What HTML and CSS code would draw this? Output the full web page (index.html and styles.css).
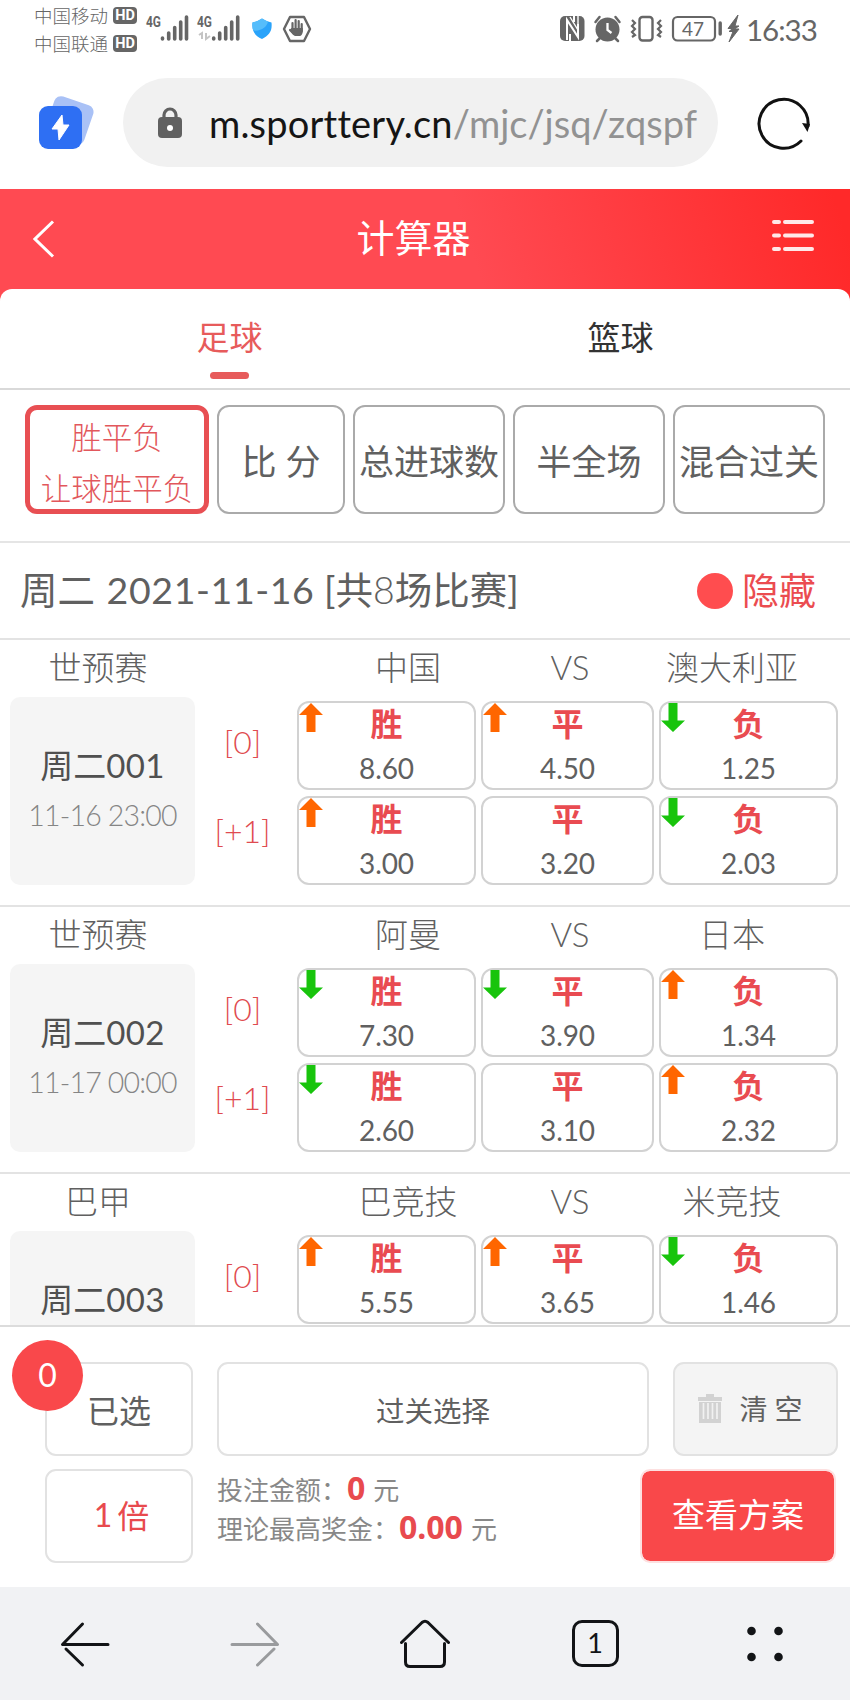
FILE: index.html
```html
<!DOCTYPE html>
<html lang="zh-CN">
<head>
<meta charset="utf-8">
<title>计算器</title>
<link rel="stylesheet" href="styles.css">
</head>
<body>
<svg class="defs" width="0" height="0">
  <symbol id="up" viewBox="0 0 24 29"><path fill="#ff6600" d="M12 0L24 12H16.500V29H7.500V12H0Z"/></symbol>
  <symbol id="down" viewBox="0 0 24 29"><path fill="#18c40c" d="M12 29L24 17.500H16.500V0H7.500V17.500H0Z"/></symbol>
</svg>
<div class="screen">
  <div class="status">
    <div class="carriers">
      <div class="carrier">中国移动<span class="hd">HD</span></div>
      <div class="carrier">中国联通<span class="hd">HD</span></div>
    </div>
    <svg class="status-left" width="170" height="34" viewBox="144 12 170 34">
      <g class="net"><text x="146" y="27" textLength="15" lengthAdjust="spacingAndGlyphs">4G</text><text x="197" y="27" textLength="15" lengthAdjust="spacingAndGlyphs">4G</text></g>
      <g stroke="#666" stroke-width="3.600" stroke-linecap="round"><path d="M162.500 38v1M168.700 33v6M174.700 27.500v11.500M180.700 22v17M186.500 17v22M213.700 38v1M219.700 33v6M225.700 27.500v11.500M231.700 22v17M237.700 17v22"/></g>
      <path d="M199 35l3-2v6M206 33v6l4-3" fill="none" stroke="#c4c4c4" stroke-width="2"/>
      <path d="M262 18.500q-4.500 3-9.500 4c-1 9 2.500 13 9.500 16.500 7-3.500 10.500-7.500 9.500-16.500q-5-1-9.500-4Z" fill="#2aa3fa"/><path d="M262 18.500q-4.500 3-9.500 4c-.3 3 0 6 .8 8 8 1 14-4 14.700-9q-3-1-6-3Z" fill="#55bdfb"/>
      <path d="M290 17h14l6 12-6 12h-14l-6-12Z" fill="none" stroke="#666" stroke-width="2.400" stroke-linejoin="round"/>
      <path d="M292.500 31v-8M295.600 29v-9M298.700 29v-8M301.700 31v-7M294 34l-4-4" stroke="#666" stroke-width="2.200" stroke-linecap="round"/><path d="M291.500 28h11.300v4q-1 4-3 4h-5q-3-2-5-6Z" fill="#666"/>
    </svg>
    <svg class="status-right" width="190" height="34" viewBox="556 12 190 34">
      <rect x="560" y="16" width="24.500" height="25" rx="5" fill="#666"/><path d="M567 40V20l11 17V24M574 16v6M570 41v-7" fill="none" stroke="#fff" stroke-width="2"/><path d="M570 17l8 13V16" fill="none" stroke="#fff" stroke-width="1.400"/>
      <circle cx="607.500" cy="29.500" r="12" fill="#666"/><path d="M607.500 23v7l4 3" fill="none" stroke="#fff" stroke-width="2.300"/><path d="M595.500 22l4-5M619.500 22l-4-5M600 38l-3 3M615 38l3 3" stroke="#666" stroke-width="2.500" stroke-linecap="round"/>
      <rect x="639.500" y="17" width="13" height="23.500" rx="3" fill="none" stroke="#666" stroke-width="2.400"/><path d="M632 20l3 3-3 3 3 3-3 3 3 3-3 2M661 20l-3 3 3 3-3 3 3 3-3 3 3 2" fill="none" stroke="#666" stroke-width="2.200"/>
      <rect x="673" y="17" width="42" height="23.500" rx="4.500" fill="none" stroke="#666" stroke-width="2.200"/><path d="M720.200 23v11" stroke="#666" stroke-width="3.400" stroke-linecap="round"/>
      <text class="battery" x="682" y="36" textLength="22" lengthAdjust="spacingAndGlyphs">47</text>
      <path d="M738 15l-10 13.500h4.500l-3.500 3h4l-4 10.500 10-13h-4.500l4.500-3h-4Z" fill="#666" stroke="#666"/>
    </svg>
    <div class="clock">16:33</div>
  </div>

  <div class="address">
    <svg class="boost" width="56" height="54" viewBox="38 96 56 54">
      <rect x="49" y="100" width="41" height="41" rx="7" fill="#a9c1f6" transform="rotate(19 70 120)"/>
      <rect x="39" y="106" width="43" height="43" rx="9" fill="#2e6ff3"/><path d="M62 115L52 129h6l1 11 10-15h-6Z" fill="#fff" stroke="#fff" stroke-linejoin="round"/>
    </svg>
    <div class="pill">
      <svg width="24" height="31" viewBox="0 0 24 31"><path d="M6 13V8a6 6 0 0 1 12 0v5" fill="none" stroke="#616161" stroke-width="3.200"/><rect y="10" width="24" height="21" rx="4" fill="#616161"/><circle cx="12" cy="21" r="3" fill="#fff"/></svg>
      <div class="url"><span class="domain">m.sporttery.cn</span><span class="path">/mjc/jsq/zqspf</span></div>
    </div>
    <svg class="reload" width="56" height="56" viewBox="756 95 56 56"><path d="M801 141A24.500 24.500 0 1 1 808 126" fill="none" stroke="#111" stroke-width="3" stroke-linecap="round"/><path d="M802 123l8 1-2.500 8Z" fill="#111"/></svg>
  </div>

  <header class="topbar">
    <svg width="22" height="38" viewBox="0 0 22 38"><path d="M20 1.500L2 19l18 17.500" fill="none" stroke="#fff" stroke-width="3"/></svg>
    <h1>计算器</h1>
    <svg width="42" height="32" viewBox="0 0 42 32"><path d="M2 2h5M13 2h27M2 15.500h5M13 15.500h27M2 29h5M13 29h27" stroke="#ffe9e9" stroke-width="4" stroke-linecap="round"/></svg>
  </header>

  <nav class="sports"><div class="sport sport-on">足球</div><div class="sport">篮球</div></nav>

  <div class="plays">
    <div class="play play-on"><span>胜平负</span><span>让球胜平负</span></div>
    <div class="play">比 分</div><div class="play">总进球数</div><div class="play">半全场</div><div class="play">混合过关</div>
  </div>

  <div class="day"><div class="day-text">周二 <span class="date">2021-11-16</span> [共<span class="count">8</span>场比赛]</div><div class="fold"><i class="dot"></i>隐藏</div></div>

  <main class="matches">
    <section class="match">
      <div class="teams"><span>世预赛</span><span>中国</span><span class="vs">VS</span><span>澳大利亚</span></div>
      <div class="detail">
        <div class="info"><b>周二<span>001</span></b><small>11-16 23:00</small></div>
        <div class="handicap"><span>[0]</span><span>[+1]</span></div>
        <div class="odds">
          <div class="odd"><svg class="trend"><use href="#up"/></svg><b>胜</b><span>8.60</span></div>
          <div class="odd"><svg class="trend"><use href="#up"/></svg><b>平</b><span>4.50</span></div>
          <div class="odd"><svg class="trend"><use href="#down"/></svg><b>负</b><span>1.25</span></div>
          <div class="odd"><svg class="trend"><use href="#up"/></svg><b>胜</b><span>3.00</span></div>
          <div class="odd"><b>平</b><span>3.20</span></div>
          <div class="odd"><svg class="trend"><use href="#down"/></svg><b>负</b><span>2.03</span></div>
        </div>
      </div>
    </section>
    <section class="match">
      <div class="teams"><span>世预赛</span><span>阿曼</span><span class="vs">VS</span><span>日本</span></div>
      <div class="detail">
        <div class="info"><b>周二<span>002</span></b><small>11-17 00:00</small></div>
        <div class="handicap"><span>[0]</span><span>[+1]</span></div>
        <div class="odds">
          <div class="odd"><svg class="trend"><use href="#down"/></svg><b>胜</b><span>7.30</span></div>
          <div class="odd"><svg class="trend"><use href="#down"/></svg><b>平</b><span>3.90</span></div>
          <div class="odd"><svg class="trend"><use href="#up"/></svg><b>负</b><span>1.34</span></div>
          <div class="odd"><svg class="trend"><use href="#down"/></svg><b>胜</b><span>2.60</span></div>
          <div class="odd"><b>平</b><span>3.10</span></div>
          <div class="odd"><svg class="trend"><use href="#up"/></svg><b>负</b><span>2.32</span></div>
        </div>
      </div>
    </section>
    <section class="match">
      <div class="teams"><span>巴甲</span><span>巴竞技</span><span class="vs">VS</span><span>米竞技</span></div>
      <div class="detail">
        <div class="info"><b>周二<span>003</span></b></div>
        <div class="handicap"><span>[0]</span></div>
        <div class="odds">
          <div class="odd"><svg class="trend"><use href="#up"/></svg><b>胜</b><span>5.55</span></div>
          <div class="odd"><svg class="trend"><use href="#up"/></svg><b>平</b><span>3.65</span></div>
          <div class="odd"><svg class="trend"><use href="#down"/></svg><b>负</b><span>1.46</span></div>
        </div>
      </div>
    </section>
  </main>

  <footer class="slip">
    <div class="slip-row">
      <div class="box chosen">已选<span class="badge">0</span></div>
      <div class="box pass">过关选择</div>
      <div class="box clear"><svg width="24" height="29" viewBox="0 0 24 29"><path d="M0 3h8V0h8v3h8v4H0Z" fill="#d2d2d2"/><path d="M1 8h22v21H1Z" fill="#d2d2d2"/><path d="M5.500 9v16M10 9v16M14.500 9v16M19 9v16" stroke="#f1f1f1" stroke-width="1.700"/></svg>清 空</div>
    </div>
    <div class="slip-row">
      <div class="box times"><span>1</span>倍</div>
      <div class="sums"><div>投注金额：<b>0</b>元</div><div>理论最高奖金：<b>0.00</b>元</div></div>
      <div class="view">查看方案</div>
    </div>
  </footer>

  <nav class="browser-nav">
    <svg viewBox="0 0 50 50"><path d="M3 25.500H48M22.500 5L2.500 25.500M6 30L22.500 46" fill="none" stroke="#121416" stroke-width="3" stroke-linecap="round" stroke-linejoin="round"/></svg>
    <svg viewBox="0 0 50 50"><path d="M2 25.500H47M27.500 5L47.500 25.500M44 30L27.500 46" fill="none" stroke="#999b9d" stroke-width="3" stroke-linecap="round" stroke-linejoin="round"/></svg>
    <svg viewBox="0 0 50 50"><path d="M1.500 23.500L22 3.500Q25 1 28 3.500L48.500 23.500M5.500 24.500V43Q5.500 47.500 10 47.500H40Q44.500 47.500 44.500 43V24.500" fill="none" stroke="#121416" stroke-width="3" stroke-linecap="round" stroke-linejoin="round"/></svg>
    <div class="pages"><span>1</span></div>
    <svg viewBox="0 0 50 50"><g fill="#121416"><circle cx="11.500" cy="12" r="4.300"/><circle cx="38.500" cy="12" r="4.300"/><circle cx="11.500" cy="38" r="4.300"/><circle cx="38.500" cy="38" r="4.300"/></g></svg>
  </nav>
</div>
</body>
</html>
```

FILE: styles.css
```css
* { box-sizing: border-box; }
body { margin: 0; background: #fff; color: #606060; font-family: Lato, "Noto Sans CJK SC", sans-serif; }
svg { flex: none; display: block; }
.defs { position: absolute; }
.screen { width: 850px; height: 1700px; display: flex; flex-direction: column; overflow: hidden; white-space: nowrap; }

.status { height: 60px; flex: none; display: flex; padding-left: 34px; color: #666; }
.carriers { width: 110px; padding-top: 1px; font: 300 18.500px/28px "Noto Sans CJK SC", sans-serif; }
.carrier { display: flex; align-items: center; gap: 5px; }
.hd { width: 24px; height: 17px; border-radius: 4px; background: #666; color: #fff; font: 700 14.500px/17px Roboto, sans-serif; text-align: center; }
.status-left { margin-top: 12px; }
.status-right { margin: 12px 0 0 242px; }
.net { font: 700 15px Roboto, sans-serif; fill: #666; }
.battery { font: 400 20px Lato, sans-serif; fill: #666; }
.clock { font-size: 29.500px; line-height: 59px; letter-spacing: -1px; }

.address { height: 129px; flex: none; display: flex; align-items: flex-start; padding: 18px 0 0 38px; }
.boost { margin-top: 18px; }
.pill { width: 595px; height: 89px; margin-left: 29px; border-radius: 45px; background: #f1f1f1; display: flex; align-items: center; padding: 0 0 0 35px; gap: 27px; }
.url { font: 400 38px/50px Lato, sans-serif; padding-top: 1px; }
.domain { color: #151515; letter-spacing: .2px; }
.path { color: #929292; letter-spacing: 0; }
.reload { margin: 17px 0 0 38px; }

.topbar { height: 114px; flex: none; margin-bottom: -14px; background: linear-gradient(72deg, #ff4a52 55%, #ff2929 98%); display: flex; align-items: flex-start; justify-content: space-between; padding: 31px 36px 0 33px; color: #fff; }
.topbar h1 { margin: -5px 0 0; font-size: 38px; font-weight: 400; line-height: 44px; }

.sports { height: 101px; flex: none; display: flex; padding: 0 35px; border-radius: 12px 12px 0 0; background: #fff; border-bottom: 2px solid #d9d9d9; }
.sport { flex: 1; padding-top: 26px; text-align: center; color: #333; font-size: 33px; line-height: 44px; }
.sport-on { color: #e75b5b; padding-right: 2px; }
.sport-on::after { content: ""; display: block; width: 39px; height: 7px; margin: 13px auto 0; border-radius: 4px; background: #e75b5b; }

.plays { height: 153px; flex: none; display: grid; grid-template-columns: 184px 128px 152px 152px 152px; gap: 8px; padding: 15px 25px 27px; border-bottom: 2px solid #e5e5e5; }
.play { height: 109px; border: 2px solid #aaa; border-radius: 12px; display: flex; align-items: center; justify-content: center; font-size: 35px; }
.play-on { flex-direction: column; border: 5px solid #e84f53; color: #e2575c; font-size: 30.500px; font-weight: 300; line-height: 51px; padding-top: 7px; }

.day { height: 97px; flex: none; display: flex; justify-content: space-between; padding: 0 34px 0 20px; border-bottom: 2px solid #e3e3e3; line-height: 94px; font-size: 37.500px; }
.date { letter-spacing: .6px; margin-left: 2px; }
.count { font-weight: 300; }
.fold { display: flex; align-items: center; gap: 9px; font-size: 37px; color: #eb4c50; }
.dot { width: 36px; height: 36px; border-radius: 50%; background: #ff4d4f; }

.matches { height: 685px; flex: none; overflow: hidden; }
.match { height: 267px; border-bottom: 2px solid #e3e3e3; }
.teams { height: 57px; display: grid; grid-template-columns: 196px 324px 100px 224px; padding-top: 5px; text-align: center; font-size: 33px; font-weight: 300; line-height: 44px; }
.teams span:nth-child(2) { padding-left: 100px; }
.detail { display: grid; grid-template-columns: 185px 102px 541px; padding-left: 10px; }
.info { height: 188px; border-radius: 10px; background: #f5f5f5; text-align: center; padding-top: 46px; }
.info b { display: block; font-size: 33px; line-height: 44px; font-weight: 400; color: #505050; }
.info span { letter-spacing: .4px; }
.info small { display: block; font-size: 28.500px; line-height: 40px; padding-top: 8px; font-weight: 300; letter-spacing: -.8px; color: #858585; }
.handicap { color: #df4b50; font-size: 32px; font-weight: 300; line-height: 89px; text-align: center; display: flex; flex-direction: column; padding-right: 7px; }
.odds { display: grid; grid-template-columns: 179px 173px 179px; grid-auto-rows: 89px; column-gap: 5px; row-gap: 6px; padding-top: 4px; }
.odd { position: relative; border: 2px solid #d2d2d2; border-radius: 12px; display: flex; flex-direction: column; align-items: center; }
.odd b { color: #e94b51; font-size: 32px; line-height: 42px; }
.odd span { font-size: 28px; line-height: 46px; letter-spacing: -.1px; }
.trend { position: absolute; left: 0; top: 0; width: 24px; height: 29px; }

.slip { height: 262px; flex: none; border-top: 2px solid #dcdcdc; background: #fff; padding: 35px 12px 0 45px; display: flex; flex-direction: column; gap: 13px; }
.slip-row { display: flex; height: 94px; }
.box { border: 2px solid #e2e2e2; border-radius: 11px; display: flex; align-items: center; justify-content: center; }
.chosen, .times { width: 148px; margin-right: 24px; font-size: 32px; position: relative; }
.badge { position: absolute; left: -35px; top: -24px; width: 71px; height: 71px; border-radius: 50%; background: #f9484b; color: #fff; font-size: 32px; line-height: 69px; text-align: center; }
.pass { width: 432px; margin-right: 24px; font-size: 28.500px; }
.clear { width: 165px; background: #f4f4f4; font-size: 28px; gap: 17px; padding: 0 10px 2px 0; }
.times { color: #e84a4e; gap: 5px; padding: 0 0 4px 5px; }
.sums { width: 424px; font-size: 26px; line-height: 39px; color: #888; }
.sums div { height: 39px; }
.sums b { font-family: "Noto Sans", sans-serif; font-size: 32px; color: #e84a4e; line-height: 38px; margin-right: 8px; }
.view { width: 196px; margin-left: -1px; border: 2px solid #fde0e0; border-radius: 10px; background: #f9484a; background-clip: padding-box; color: #fff; font-size: 33px; line-height: 86px; text-align: center; }

.browser-nav { flex: 1; background: #f1f2f4; display: grid; grid-template-columns: repeat(5, 170px); align-items: center; justify-items: center; }
.browser-nav svg { width: 50px; height: 50px; }
.pages { width: 47px; height: 47px; border: 3px solid #121416; border-radius: 10px; color: #121416; font-size: 27px; line-height: 40px; text-align: center; }
```
